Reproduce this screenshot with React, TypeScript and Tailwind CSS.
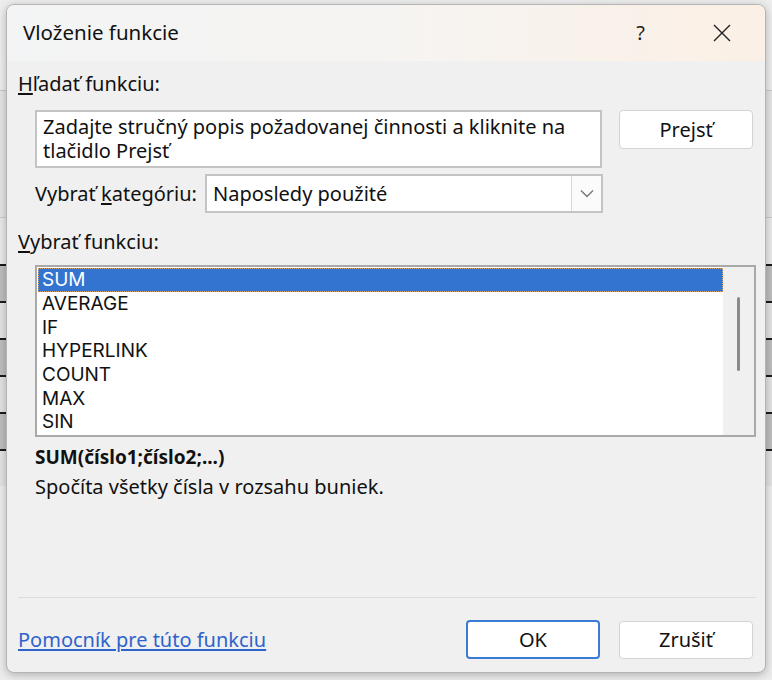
import React from "react";

const FONT = { fontFamily: '"Noto Sans", "Open Sans", sans-serif' };
const LIST_FONT = { fontFamily: 'Inter, "Noto Sans", sans-serif' };

function BgRows() {
  const rows = [0, 1, 2, 3, 4, 5];
  return (
    <div className="flex h-[680px] w-[772px] flex-col bg-[#ececec]">
      <div className="h-[90px] bg-[#ededed]" />
      <div className="h-px bg-[#c9c9c9]" />
      <div className="h-[126px] bg-[#e4e4e4]" />
      <div className="h-px bg-[#c9c9c9]" />
      <div className="h-[46px] bg-[#e9e9e9]" />
      {rows.map((i) => (
        <div
          key={i}
          className={
            "h-[37px] border-t-2 border-[#1a1a1a] " +
            (i % 2 === 0 ? "bg-[#bdbdbd]" : "bg-[#e2e2e2]")
          }
        />
      ))}
      <div className="flex-1 bg-[#ececec]" />
    </div>
  );
}

function ListRow({ label, selected }: { label: string; selected?: boolean }) {
  if (selected) {
    return (
      <div className="flex h-[24px] items-center border border-dotted border-[#d9a56a] bg-[#3274d0] pl-[3px] text-[19px] leading-[22px] text-white">
        {label}
      </div>
    );
  }
  return (
    <div className="flex h-[23.7px] items-center pl-[4px] text-[19px] leading-[22px] text-[#111]">{label}</div>
  );
}

export default function App() {
  const fns = ["AVERAGE", "IF", "HYPERLINK", "COUNT", "MAX", "SIN"];
  return (
    <div className="relative h-[680px] w-[772px] overflow-hidden" style={FONT}>
      <BgRows />
      <div className="absolute left-[6px] top-[4px] flex h-[669px] w-[760px] flex-col overflow-hidden rounded-[8px] border border-[#b4b4b4] bg-[#f0f0f0] shadow-[0_2px_8px_rgba(0,0,0,0.25)]">
        {/* Title bar */}
        <div className="flex h-[56px] shrink-0 items-center bg-gradient-to-r from-[#f3f4f5] via-[#f6f4f2] to-[#fbf0e5] pl-[16px]">
          <div className="flex-1 pb-[2px] text-[20.5px] text-[#111]">Vloženie funkcie</div>
          <div className="mr-[68px] text-[20px] text-[#222]">?</div>
          <svg width="18" height="18" viewBox="0 0 18 18" className="mr-[34px]">
            <path d="M1 1 L17 17 M17 1 L1 17" stroke="#222" strokeWidth="1.4" />
          </svg>
        </div>

        {/* Body */}
        <div className="flex flex-1 flex-col pl-[11px] pr-[12px] text-[20px] text-[#111]">
          <div className="mt-[11px] h-[24px] leading-[24px]">
            <u className="underline-offset-2">H</u>ľadať funkciu:
          </div>

          <div className="mt-[14px] flex pl-[17px]">
            <div className="h-[58px] w-[568px] border-2 border-[#c4c4c4] bg-white px-[6px] pt-[3px] leading-[24px]">
              Zadajte stručný popis požadovanej činnosti a kliknite na tlačidlo Prejsť
            </div>
            <button className="ml-[17px] h-[39px] w-[134px] rounded-[4px] border border-[#d3d3d3] bg-white text-[20px] text-[#111]">
              Pre<u className="underline-offset-2">j</u>sť
            </button>
          </div>

          <div className="mt-[6px] flex items-center pl-[17px]">
            <div className="w-[170px] whitespace-nowrap">
              Vybrať <u className="underline-offset-2">k</u>ategóriu:
            </div>
            <div className="flex h-[39px] w-[398px] items-stretch border-2 border-[#c4c4c4] bg-white">
              <div className="flex flex-1 items-center pl-[6px]">Naposledy použité</div>
              <div className="flex w-[30px] items-center justify-center border-l border-[#d6d6d6] bg-[#fbfbfb]">
                <svg width="14" height="9" viewBox="0 0 14 9">
                  <path d="M1 1.5 L7 7.5 L13 1.5" fill="none" stroke="#777" strokeWidth="1.4" />
                </svg>
              </div>
            </div>
          </div>

          <div className="mt-[17px] h-[24px] leading-[24px]">
            <u className="underline-offset-2">V</u>ybrať funkciu:
          </div>

          <div className="ml-[17px] mt-[11px] flex h-[172px] w-[721px] border-2 border-[#a9a9a9] bg-white">
            <div className="flex flex-1 flex-col overflow-hidden pl-px pt-px" style={LIST_FONT}>
              <ListRow label="SUM" selected />
              {fns.map((f) => (
                <ListRow key={f} label={f} />
              ))}
            </div>
            <div className="flex w-[31px] justify-center bg-[#f0f0f0] pt-[30px]">
              <div className="h-[74px] w-[3px] rounded-full bg-[#8a8a8a]" />
            </div>
          </div>

          <div className="ml-[17px] mt-[8px] h-[24px] text-[19px] font-bold leading-[24px]">SUM(číslo1;číslo2;...)</div>
          <div className="ml-[17px] mt-[6px] h-[24px] leading-[24px]">Spočíta všetky čísla v rozsahu buniek.</div>

          <div className="mt-[98px] h-px w-[738px] bg-[#dcdcdc]" />

          <div className="mt-[22px] flex items-center">
            <a className="flex-1 cursor-pointer text-[#2f63cc] underline underline-offset-2">
              Pomocník pre túto funkciu
            </a>
            <button className="h-[39px] w-[134px] rounded-[4px] border-2 border-[#3b7bd6] bg-white text-[20px] text-[#111]">
              OK
            </button>
            <button className="ml-[19px] h-[38px] w-[134px] rounded-[4px] border border-[#d3d3d3] bg-white text-[20px] text-[#111]">
              Zrušiť
            </button>
          </div>
        </div>
      </div>
    </div>
  );
}
